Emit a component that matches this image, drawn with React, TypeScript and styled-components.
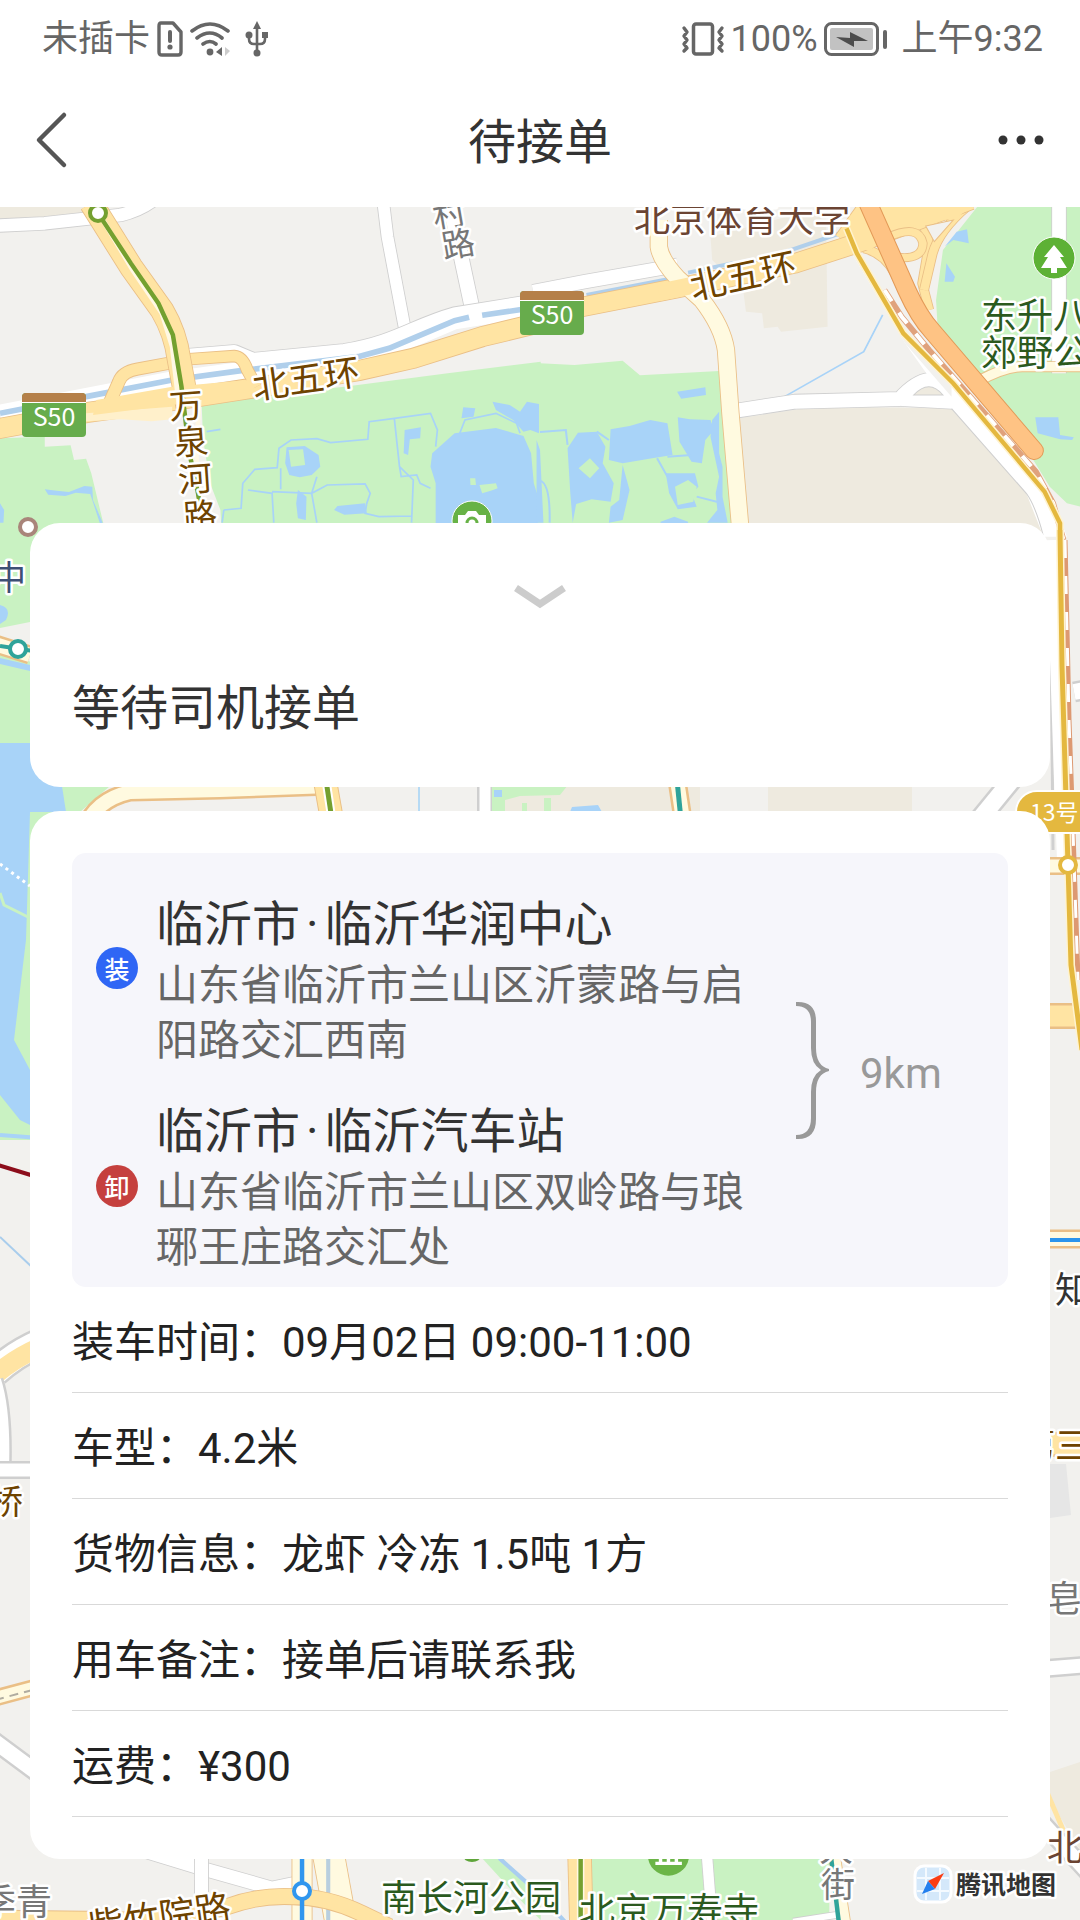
import React from "react";
import styled, { createGlobalStyle } from "styled-components";

const GlobalStyle = createGlobalStyle`
  *, *::before, *::after { box-sizing: border-box; }
  html, body { margin: 0; padding: 0; }
  body {
    background: #ffffff;
    color: #333333;
    font-family: Roboto, "Noto Sans CJK SC", sans-serif;
    font-size: 42px;
  }
  h1, h2, h3, p, dl, dd, ol { margin: 0; padding: 0; font-weight: 400; }
`;

const Page = styled.div`
  display: flex;
  flex-direction: column;
  min-height: 100vh;
`;

const StatusBar = styled.div`
  display: flex;
  align-items: center;
  justify-content: space-between;
  height: 74px;
  padding: 3px 37px 0 42px;
  color: #666666;
  font-size: 36px;
  line-height: 44px;
`;

const StatusGroup = styled.div<{ $gap: number }>`
  display: flex;
  align-items: center;
  gap: ${(p) => p.$gap}px;
  white-space: nowrap;

  svg { display: block; }
`;

const Clock = styled.span`
  margin-left: 8px;
`;

const NavBar = styled.header`
  display: grid;
  grid-template-columns: 1fr auto 1fr;
  align-items: center;
  height: 133px;
  padding: 0 30px;
`;

const NavTitle = styled.h1`
  padding-top: 4px;
  font-size: 48px;
  line-height: 64px;
`;

const IconButton = styled.button<{ $end?: boolean }>`
  display: flex;
  align-items: center;
  justify-self: ${(p) => (p.$end ? "end" : "start")};
  height: 64px;
  padding: 0 0 2px;
  border: 0;
  background: none;
  color: inherit;
  cursor: pointer;
`;

const MapArea = styled.main`
  position: relative;
  flex: 1;
  padding: 316px 30px 60px;
  background: #f2f1ee;
  overflow: hidden;
`;

const MapCanvas = styled.svg`
  position: absolute;
  inset: 0;
  width: 100%;
  height: 100%;
  font-family: "Noto Sans CJK SC", sans-serif;
`;

const Panels = styled.div`
  position: relative;
  display: flex;
  flex-direction: column;
  gap: 24px;
`;

const Card = styled.section`
  padding: 42px;
  border-radius: 30px;
  background: #ffffff;
`;

const CollapseButton = styled(IconButton)`
  justify-content: center;
  width: 100%;
  height: 64px;
`;

const StatusText = styled.h2`
  padding: 46px 0 2px;
  font-size: 48px;
  line-height: 68px;
`;

const RouteBox = styled.div`
  display: flex;
  align-items: center;
  padding: 14px 24px 12px;
  border-radius: 14px;
  background: #f6f6fb;
`;

const Stops = styled.ol`
  display: flex;
  flex-direction: column;
  gap: 29px;
  width: 650px;
  list-style: none;
`;

const Stop = styled.li`
  display: flex;
  align-items: center;
  gap: 18px;
`;

const Badge = styled.span<{ $color: string }>`
  display: flex;
  flex: none;
  align-items: center;
  justify-content: center;
  width: 42px;
  height: 42px;
  border-radius: 50%;
  background: ${(p) => p.$color};
  color: #ffffff;
  font-family: "Noto Sans CJK SC", sans-serif;
  font-size: 25px;
  font-weight: 500;
  line-height: 42px;
`;

const Place = styled.div<{ $top: number }>`
  flex: 1;
  padding-top: ${(p) => p.$top}px;
`;

const PlaceName = styled.h3`
  font-size: 48px;
  line-height: 66px;
`;

const Dot = styled.span`
  margin: 0 6px;
`;

const PlaceAddress = styled.p`
  width: 600px;
  color: #666666;
  line-height: 55px;
`;

const Distance = styled.div`
  display: flex;
  align-items: center;
  gap: 30px;
  margin-left: 50px;
  color: #999999;
  line-height: 56px;
`;

const DistanceValue = styled.span`
  padding-top: 6px;
`;

const Details = styled.dl`
  color: #222222;
`;

const DetailRow = styled.div`
  display: flex;
  padding: 28px 0 21px;
  border-bottom: 1px solid #d9d9d9;
  line-height: 56px;
`;

/* ---------- map helpers ---------- */

type RoadProps = { d: string; w: number; fill?: string; edge?: string };

function Road({ d, w, fill = "#ffffff", edge = "#cfcfcf" }: RoadProps) {
  return (
    <g fill="none" strokeLinejoin="round">
      <path d={d} stroke={edge} strokeWidth={w + 5} />
      <path d={d} stroke={fill} strokeWidth={w} />
    </g>
  );
}

type LabelProps = {
  x: number;
  y: number;
  text: string;
  color: string;
  size?: number;
  rotate?: number;
  anchor?: "start" | "middle" | "end";
  weight?: number;
};

function Label({ x, y, text, color, size = 36, rotate = 0, anchor = "middle", weight = 400 }: LabelProps) {
  return (
    <text
      transform={`translate(${x} ${y}) rotate(${rotate})`}
      y={Math.round(size * 0.38)}
      fontSize={size}
      fontWeight={weight}
      fill={color}
      textAnchor={anchor}
      stroke="#ffffff"
      strokeWidth={5}
      strokeLinejoin="round"
      paintOrder="stroke"
    >
      {text}
    </text>
  );
}

function Station({ x, y, color }: { x: number; y: number; color: string }) {
  return <circle cx={x} cy={y} r={8} fill="#ffffff" stroke={color} strokeWidth={4} />;
}

function Shield({ x, y }: { x: number; y: number }) {
  return (
    <g>
      <rect x={x} y={y} width={64} height={44} rx={4} fill="#67ac4c" />
      <path d={`M${x} ${y + 9}v-5q0-4 4-4h56q4 0 4 4v5z`} fill="#b58049" />
      <path d={`M${x} ${y + 9.5}h64`} stroke="#ffffff" />
      <text x={x + 32} y={y + 33} fontSize={25} fill="#ffffff" textAnchor="middle">
        S50
      </text>
    </g>
  );
}

const GREEN = "#c9f2c2";
const WATER = "#a8d3f8";
const YELLOW = "#ffe4a3";
const YELLOW_EDGE = "#eabf86";
const PALE = "#fffae0";
const BEIGE = "#eeeadf";

function NorthWest() {
  return (
    <g transform="translate(0 200) scale(.3444 .3333)">
      <path d="M0 20H250L255 45L0 60z" fill={BEIGE} />
      <path d="M585 605L1000 560L1300 520L1570 485V1020H645L640 930L610 850L590 720z" fill={GREEN} />
      <path d="M0 715L130 710V740L205 736L215 780L250 776L265 820L300 970V1020H0z" fill={GREEN} />
      <path d="M130 868L165 872L200 876L245 858L268 860L270 900L298 968L290 970L262 882L220 878L190 888L140 884zM0 910L12 930L10 968H0z" fill={WATER} />
      <Road d="M-10 77L130 70L350 45C390 35 420 20 445 0" w={38} />
      <Road d="M1112 0L1125 110L1178 400" w={34} />
      <Road d="M1300 -20L1345 200L1372 330" w={42} />
      <Road d="M540 470L680 458L735 482L1000 455C1150 430 1200 380 1320 345L1590 300" w={46} />
      <path d="M0 640L200 600L500 540L700 512L1040 470L1130 445L1320 362L1570 322" fill="none" stroke="#ffffff" strokeWidth="52" />
      <path d="M0 640L250 590L500 540L700 512L1040 470L1130 445L1320 362L1362 352M1400 346L1570 320" fill="none" stroke="#b0cfeb" strokeWidth="17" />
      <Road d="M-10 687L250 638L500 602L700 570L1040 512L1200 475L1400 410L1580 365" w={58} fill={YELLOW} edge={YELLOW_EDGE} />
      <path d="M250 664L350 658L440 664L500 658L500 620L250 640z" fill="#fff0cb" />
      <Road d="M315 615L345 545Q355 515 400 507L500 488" w={34} fill={YELLOW} edge={YELLOW_EDGE} />
      <Road d="M540 478L680 468Q705 470 718 510L745 560" w={32} fill={YELLOW} edge={YELLOW_EDGE} />
      <Road d="M265 10L380 200L470 330Q510 400 520 480L545 620" w={66} fill={YELLOW} edge={YELLOW_EDGE} />
      <path d="M280 600L500 560L720 540L740 570L500 615L270 645z" fill={YELLOW} />
      <path d="M270 10L385 210L470 340L500 440L520 620M578 600L570 770L590 970" fill="none" stroke="#fff8e4" strokeWidth="14" />
      <path d="M285 40L380 190L460 310L502 405L527 560L550 760L575 880L590 980" fill="none" stroke="#74a02f" strokeWidth="13" />
      {/* ponds and ditches of the park */}
      <path d="M1255 760L1320 700L1440 684L1520 708L1542 760L1550 850L1562 890V970H1265V850L1250 800z" fill={WATER} />
      <g fill="none" stroke={WATER} strokeWidth="5">
        <path d="M600 695L640 688M650 930L700 925L705 850L740 808L805 803L810 745L845 720L920 716L960 728L1068 718L1072 665L1140 656L1250 640L1270 690L1265 740M1145 656L1160 800L1200 840L1195 968M1160 800L1165 830L1210 825L1220 850L1250 865M720 870L790 880L795 968M790 875L905 880L950 855L1060 852L1075 880L1065 910L1060 940L1100 950L1195 948M920 830L905 880L920 968M815 805V868M650 930L645 968" />
        <path d="M1335 700L1350 660L1440 640L1500 670L1510 700" />
      </g>
      <path d="M832 742L885 738L925 765L930 800L905 825L870 832L840 825L828 790zM865 870L890 890L888 960L865 955L860 910zM980 918L1060 910L1065 940L1000 944L970 930zM1175 690L1222 682L1220 715L1190 718L1185 765L1172 760zM1345 622L1380 625L1375 650L1340 655zM1430 605L1480 615L1510 635L1530 605L1565 612V700L1540 690L1520 695L1490 660L1440 630z" fill={WATER} />
      <path d="M838 750L880 748L886 795L845 800zM1365 835L1380 835L1382 855L1366 855zM1392 855L1440 850L1445 865L1425 872L1400 880z" fill={GREEN} />
    </g>
  );
}

function NorthEast() {
  return (
    <g transform="translate(540 200) scale(.3444 .3333)">
      <path d="M495 110L830 20L835 380L700 395L690 380L650 385L645 340L598 335L590 270L500 180z" fill={BEIGE} />
      <path d="M0 490L100 495L240 482L290 526L520 513L560 970H0z" fill={GREEN} />
      <path d="M1270 20H1570V920L1530 910L1480 860L1290 540L1155 390L1150 300L1170 150z" fill={GREEN} />
      <path d="M575 655L800 620L1195 625L1415 880L1465 1010H610z" fill={BEIGE} />
      {/* lakes */}
      <path d="M0 750L10 968H-10V720zM80 745L110 698L165 695L190 740L182 790L214 850L205 905L150 898L105 912L95 968L88 880zM205 688L260 678L320 660L370 670L385 765L330 774L240 790L200 780zM400 652L435 658L495 660L505 690L480 720L470 790L440 785L405 725zM500 660L520 635V760L530 800V890L545 968H485L515 930L510 880L520 830L495 710zM365 820L450 820L460 860L440 880L455 920L400 928L375 880zM240 795L260 870L240 960L200 968L205 920L230 900zM398 575L480 562L482 585L410 596zM350 965L390 950L430 965V970H350z" fill={WATER} />
      <path d="M145 775L172 805L145 835L112 805zM392 860L430 840L455 860L445 905L400 915z" fill={GREEN} />
      <path d="M0 696L75 690L80 735M165 695L200 720M370 770L440 765M340 775L370 830M0 842Q30 850 28 968M455 890L530 910" fill="none" stroke={WATER} strokeWidth="6" />
      <path d="M1210 95L1240 88L1245 130L1200 120L1175 140zM1180 190L1205 230L1200 245L1175 245zM1438 652H1505L1510 705L1550 712L1545 720L1510 718L1445 700z" fill={WATER} />
      <path d="M995 345L940 455L710 590" fill="none" stroke={WATER} strokeWidth="5" />
      {/* streets */}
      <Road d="M-20 275L130 245L350 205L400 195" w={40} />
      <path d="M135 285L375 237M430 218L560 190M700 160L900 90" fill="none" stroke="#b0cfeb" strokeWidth="12" />
      <Road d="M1507 0V520" w={40} />
      <Road d="M1270 545Q1350 500 1400 500H1570" w={28} fill={PALE} edge={YELLOW_EDGE} />
      <Road d="M570 632L740 605L1045 597Q1090 545 1130 540Q1170 545 1190 590L1210 606L1050 597" w={42} />
      <path d="M880 90L905 160L1060 430L1195 626L1412 880L1462 1010H1530L1500 930L1460 850L1240 590L1060 390L930 160z" fill="#ffffff" />
      <path d="M880 90L905 160L1060 430L1195 590L1195 560L1060 380L930 160z" fill="#f2f1ee" />
      <path d="M1195 626L1412 880Q1440 920 1462 1010" fill="none" stroke="#cfcfcf" strokeWidth="3" />
      <path d="M1085 585Q1130 535 1170 585z" fill={BEIGE} stroke="#cfcfcf" strokeWidth="3" />
      {/* ring road and interchange */}
      <Road d="M880 120L950 20" w={50} fill={YELLOW} edge={YELLOW_EDGE} />
      <Road d="M940 145Q1000 160 1030 220L1075 320L1130 400" w={24} fill={YELLOW} edge={YELLOW_EDGE} />
      <Road d="M1110 60L1130 130L1110 250L1130 330" w={24} fill={YELLOW} edge={YELLOW_EDGE} />
      <Road d="M1240 20Q1160 90 1140 160L1115 270" w={24} fill={YELLOW} edge={YELLOW_EDGE} />
      <Road d="M-20 350L400 264L740 190L920 130L1060 75L1110 55L1250 0" w={56} fill={YELLOW} edge={YELLOW_EDGE} />
      <path d="M900 110L980 20L1250 20L1210 55L1110 70L1020 100L960 150L890 150z" fill={YELLOW} />
      <Road d="M1010 112Q1100 70 1112 130Q1110 180 1040 172" w={22} fill={YELLOW} edge={YELLOW_EDGE} />
      <path d="M1120 78L1200 60L1145 125z" fill="#f2f1ee" stroke={YELLOW_EDGE} strokeWidth="3" />
      <Road d="M345 60V140Q350 180 400 235L470 300Q530 380 540 450L553 640L582 990" w={48} fill={PALE} edge={YELLOW_EDGE} />
      <path d="M340 252L420 235L500 217L520 265L400 292L350 302z" fill={YELLOW} />
      <path d="M1000 270L1050 350L1130 450L1300 650L1440 815L1490 910L1520 1020" fill="none" stroke="#e0a27c" strokeWidth="17" />
      <path d="M1000 270L1050 350L1130 450L1300 650L1440 815L1490 910L1520 1020" fill="none" stroke="#ffffff" strokeWidth="12" strokeDasharray="40 40" />
      <g fill="none" strokeLinecap="round" strokeLinejoin="round">
        <path d="M940 -20L1065 270Q1100 350 1140 395L1435 752" stroke="#e39a58" strokeWidth="56" />
        <path d="M940 -20L1065 270Q1100 350 1140 395L1435 752" stroke="#fec384" strokeWidth="50" />
      </g>
      <path d="M890 85L920 160L1055 400L1200 550L1465 875L1510 970V1030" fill="none" stroke="#fff3cf" strokeWidth="22" />
      <path d="M890 85L920 160L1055 400L1200 550L1465 875L1510 970V1030" fill="none" stroke="#e4b83f" strokeWidth="13" />
    </g>
  );
}

function WestEdge() {
  return (
    <g>
      <path d="M0 520H100V610L30 622L0 628zM0 655L60 668V800L30 1140H0z" fill={GREEN} />
      <path d="M0 605Q12 608 6 620L0 624zM0 658L30 665V671L0 664zM0 743H30L60 760L66 786V812H30L26 940L14 1040L30 1070V1125L20 1120L0 1095z" fill={WATER} />
      <path d="M0 893L4 905L30 918" fill="none" stroke={GREEN} strokeWidth="3" />
      <path d="M0 864L30 886" stroke="#ffffff" strokeWidth="3" strokeDasharray="3 4" />
      <path d="M62 786H110L80 812H66z" fill={GREEN} />
      <Road d="M-5 644L30 655" w={14} fill={PALE} edge={YELLOW_EDGE} />
      <path d="M0 646L40 652" stroke="#2fa39a" strokeWidth="4" />
      <path d="M0 1135L40 1138" stroke={WATER} strokeWidth="4" />
      <path d="M-2 1165L34 1176" stroke="#8c0d1b" strokeWidth="4" />
      <path d="M0 1237L34 1269" stroke="#a9cdec" strokeWidth="2" />
      <Road d="M-5 1372Q15 1354 40 1343" w={26} />
      <path d="M-5 1375Q15 1358 40 1347" fill="none" stroke={YELLOW} strokeWidth="19" />
      <Road d="M-4 1380Q6 1410 4 1470" w={10} />
      <Road d="M-5 1470H40" w={13} />
      <Road d="M-5 1698L40 1686" w={12} fill={PALE} edge={YELLOW_EDGE} />
      <path d="M-5 1700L40 1688" stroke="#b0aca0" strokeWidth="2" strokeDasharray="9 6" />
      <Road d="M-10 1738L40 1775" w={15} />
    </g>
  );
}

function MiddleStrip() {
  return (
    <g>
      <Road d="M84 830Q95 800 130 792L220 790L330 786" w={14} fill={PALE} edge={YELLOW_EDGE} />
      <path d="M324 775L332 820" stroke={YELLOW_EDGE} strokeWidth="24" />
      <path d="M324 775L332 820" stroke={YELLOW} strokeWidth="22" />
      <path d="M326 780L332 820" stroke="#ffffff" strokeWidth="9" />
      <path d="M326 780L332 820" stroke="#74a02f" strokeWidth="5" />
      <path d="M419 780V815" stroke="#b6daf4" strokeWidth="2" />
      <Road d="M485 780V815" w={11} />
      <path d="M492 785H700V812H492zM768 785H912V812H768z" fill={BEIGE} />
      <path d="M492 785H568L560 795L520 796L505 800V812H492zM522 803H527V812H522zM544 798H551V812H544z" fill={GREEN} />
      <path d="M570 812L572 807L598 805L602 812zM494 790H502V797H494z" fill={WATER} />
      <Road d="M677 780L683 820" w={14} fill={PALE} edge={YELLOW_EDGE} />
      <path d="M677 780L681 820" stroke="#2fa39a" strokeWidth="5" />
      <Road d="M1020 770L975 825" w={17} />
    </g>
  );
}

function EastEdge() {
  return (
    <g fill="none">
      <path d="M1051 620L1053 850" stroke="#d0d0d0" strokeWidth="3" />
      <path d="M1055 540L1063 780L1066 860" stroke="#ffffff" strokeWidth="18" />
      <Road d="M1050 866H1085" w={13} fill={PALE} edge={YELLOW_EDGE} />
      <Road d="M1050 1016H1085" w={21} fill={YELLOW} edge={YELLOW_EDGE} />
      <path d="M1065 540L1069 720L1074 860L1078 980" stroke="#dd9972" strokeWidth="5" />
      <path d="M1065 540L1069 720L1074 860L1078 980" stroke="#ffffff" strokeWidth="3" strokeDasharray="18 18" />
      <Road d="M1074 692L1085 690" w={16} />
      <path d="M1060 530L1062 666L1068 865L1071 965L1082 1050" stroke="#fff3cf" strokeWidth="8" />
      <path d="M1060 530L1062 666L1068 865L1071 965L1082 1050" stroke="#e4b83f" strokeWidth="5" />
      <Road d="M1040 1239H1090" w={14} fill={PALE} edge={YELLOW_EDGE} />
      <path d="M1040 1240H1090" stroke="#2b95ec" strokeWidth="4" />
      <path d="M1050 1464H1066L1071 1515L1050 1518z" fill="#e6e6e6" />
      <Road d="M1040 1444L1090 1445" w={20} fill={YELLOW} edge={YELLOW_EDGE} />
      <Road d="M1040 1669L1090 1665" w={14} />
      <path d="M1050 1772L1080 1762V1850L1050 1800z" fill={BEIGE} />
      <path d="M1046 1790L1064 1832" stroke={YELLOW} strokeWidth="5" />
      <Road d="M1040 1820L1090 1875" w={14} />
      <rect x="1016" y="791" width="90" height="42" rx="21" fill="#e4b83f" stroke="#ffffff" strokeWidth="2" />
      <text x="1030" y="821" fontSize="23" fill="#ffffff">13号</text>
    </g>
  );
}

function SouthStrip() {
  return (
    <g>
      <g transform="translate(0 1780) scale(.3444 .3333)">
        <Road d="M300 175L585 265L790 325L860 310" w={40} />
        <Road d="M585 230V430" w={38} />
        <path d="M585 250V300" stroke="#ffffff" strokeWidth="38" />
        <path d="M1400 235H1460L1570 350V420L1520 370z" fill={GREEN} />
        <path d="M1450 235L1570 345L1640 425" fill="none" stroke="#a9cdf0" strokeWidth="12" />
        <Road d="M955 230L990 430" w={90} fill={PALE} edge={YELLOW_EDGE} />
        <path d="M953 235V430" stroke="#b9cfdf" strokeWidth="12" />
        <Road d="M877 230V430" w={56} fill={PALE} edge={YELLOW_EDGE} />
        <Road d="M0 415L250 418Q480 430 660 380Q750 345 850 350Q950 350 1050 400L1130 440" w={46} fill={YELLOW} edge={YELLOW_EDGE} />
        <path d="M877 230V430" stroke="#3096ee" strokeWidth="13" />
      </g>
      <g transform="translate(540 1780) scale(.3444 .3333)">
        <path d="M140 235H840V400L700 430H140z" fill={GREEN} />
        <Road d="M115 230L120 430" w={66} fill={YELLOW} edge={YELLOW_EDGE} />
        <path d="M118 230V430" stroke="#fff8e4" strokeWidth="22" />
        <path d="M118 230V430" stroke="#74a02f" strokeWidth="13" />
        <Road d="M485 230L500 430" w={30} />
        <Road d="M735 425L860 405" w={18} />
        <Road d="M855 230L885 430" w={32} fill={PALE} edge={YELLOW_EDGE} />
        <path d="M845 230L868 430" stroke="#2fa39a" strokeWidth="13" />
        <ellipse cx="373" cy="225" rx="60" ry="62" fill="#6bb547" />
        <path d="M335 250H412M350 225V250M373 225V250M396 225V250" stroke="#ffffff" strokeWidth="10" />
      </g>
      <ellipse cx="472" cy="1856" rx="9" ry="6" fill="#5fa53a" />
      <Station x={302} y={1891} color="#3096ee" />
    </g>
  );
}

function MapLabels() {
  const road = "#6e4300";
  const park = "#2b5a1e";
  const grey = "#777777";
  const school = "#6b4433";
  return (
    <g>
      <Shield x={22} y={393} />
      <Shield x={520} y={291} />
      <Station x={98} y={213} color="#74a02f" />
      <Station x={28} y={527} color="#a9857a" />
      <Station x={18} y={649} color="#2fa39a" />
      <Station x={1068} y={865} color="#e4b83f" />

      <Label x={449} y={213} text="村" color={grey} size={33} rotate={-10} />
      <Label x={458} y={243} text="路" color={grey} size={33} rotate={-10} />
      <Label x={306} y={378} text="北五环" color={road} rotate={-8} />
      <Label x={743} y={275} text="北五环" color={road} rotate={-12} />
      <Label x={186} y={405} text="万" color={road} size={34} rotate={-4} />
      <Label x={191} y={441} text="泉" color={road} size={34} rotate={-4} />
      <Label x={195} y={478} text="河" color={road} size={34} rotate={-4} />
      <Label x={200} y={515} text="路" color={road} size={34} rotate={-4} />
      <Label x={742} y={218} text="北京体育大学" color={school} />
      <Label x={981} y={315} text="东升八" color={park} anchor="start" />
      <Label x={981} y={352} text="郊野公" color={park} anchor="start" />

      <circle cx={1054} cy={258} r={21} fill="#5db135" stroke="#ffffff" strokeWidth={1} />
      <path d="M1054 245L1064 257H1060L1067 268H1057V273H1051V268H1041L1048 257H1044z" fill="#ffffff" />
      <circle cx={472} cy={521} r={20} fill="#67b246" stroke="#ffffff" strokeWidth={1} />
      <path d="M458 515H465L468 511H476L479 515H486V530H458z" fill="#ffffff" />
      <circle cx={472} cy={523} r={5} fill="none" stroke="#67b246" strokeWidth={3} />

      <Label x={26} y={577} text="中" color="#3d4f74" size={34} anchor="end" />
      <Label x={23} y={1501} text="桥" color={road} size={34} anchor="end" />
      <Label x={52} y={1901} text="季青" color={grey} anchor="end" />
      <Label x={1055} y={1289} text="知" color="#333333" anchor="start" size={36} />
      <Label x={1019} y={1445} text="第三" color={road} anchor="start" />
      <Label x={1046} y={1598} text="皂" color={grey} anchor="start" />
      <Label x={1047} y={1847} text="北" color={school} anchor="start" />
      <Label x={159} y={1916} text="紫竹院路" color={road} rotate={-8} />
      <Label x={471} y={1897} text="南长河公园" color={park} />
      <Label x={669} y={1910} text="北京万寿寺" color={park} />
      <Label x={836} y={1848} text="大" color={grey} size={34} />
      <Label x={838} y={1884} text="街" color={grey} size={34} />

      <rect x={915} y={1866} width={36} height={36} rx={9} fill="#d4e8fa" stroke="#ffffff" strokeWidth={3} />
      <path d="M917 1878H949M917 1891H949M926 1868V1900M940 1868V1900" stroke="#f4faff" strokeWidth={2} />
      <path d="M944 1873L935 1889L928 1881z" fill="#fa3d14" />
      <path d="M922 1894L935 1889L928 1881z" fill="#2580ee" />
      <Label x={1006} y={1884} text="腾讯地图" color="#333333" size={25} weight={700} />
    </g>
  );
}

function CityMap() {
  return (
    <MapCanvas viewBox="0 207 1080 1713" preserveAspectRatio="xMidYMin slice" role="img" aria-label="地图">
      <rect y="207" width="1080" height="1713" fill="#f2f1ee" />
      <WestEdge />
      <NorthWest />
      <NorthEast />
      <MiddleStrip />
      <EastEdge />
      <SouthStrip />
      <MapLabels />
    </MapCanvas>
  );
}

/* ---------- icons ---------- */

const SimIcon = () => (
  <svg width="26" height="36" viewBox="0 0 26 36" fill="none" stroke="currentColor" strokeWidth="3.4" strokeLinejoin="round">
    <path d="M4 2H16L24 11V31Q24 34 21 34H5Q2 34 2 31V5Q2 2 4 2z" />
    <path d="M13 11V20" strokeWidth="4" strokeLinecap="round" />
    <circle cx="13" cy="26" r="2.6" fill="currentColor" stroke="none" />
  </svg>
);

const WifiIcon = () => (
  <svg width="40" height="36" viewBox="0 0 40 36" fill="none" stroke="currentColor" strokeWidth="3.6" strokeLinecap="round">
    <path d="M2 10Q20 -4 38 10M7 17Q20 7 32 17M13 23Q20 18 26 23" />
    <circle cx="20" cy="31" r="3.4" fill="currentColor" stroke="none" />
    <path d="M32 26V35L26 31z" fill="currentColor" stroke="none" />
    <path d="M35 26V35L40 30z" fill="#cccccc" stroke="none" />
  </svg>
);

const UsbIcon = () => (
  <svg width="36" height="36" viewBox="-8 0 36 36" fill="none" stroke="currentColor" strokeWidth="2.6">
    <path d="M12 6V30M4 14V18Q4 23 9 23H15Q20 23 20 18V14" />
    <path d="M12 0L16 8H8zM17 11H23V17H17z" fill="currentColor" stroke="none" />
    <circle cx="4" cy="14" r="3.5" fill="currentColor" stroke="none" />
    <circle cx="12" cy="32" r="3.5" fill="currentColor" stroke="none" />
  </svg>
);

const VibrateIcon = () => (
  <svg width="44" height="36" viewBox="0 0 44 36" fill="none" stroke="currentColor" strokeLinejoin="round" strokeLinecap="round">
    <rect x="12.5" y="3" width="19" height="30" rx="2.5" strokeWidth="3.5" />
    <path d="M3 7L6 11L3 15L6 19L3 23L6 27L3 30M41 7L38 11L41 15L38 19L41 23L38 27L41 30" strokeWidth="3.4" />
  </svg>
);

const BatteryIcon = () => (
  <svg width="64" height="36" viewBox="0 0 64 36">
    <rect x="1.5" y="2.5" width="52" height="31" rx="6" fill="none" stroke="currentColor" strokeWidth="3" />
    <rect x="6" y="7" width="43" height="22" rx="2" fill="#c2c2c2" />
    <path d="M12 16L26 17V11L44 20L30 20V26z" fill="#4d4d4d" />
    <path d="M61 11V26" stroke="currentColor" strokeWidth="4" strokeLinecap="round" />
  </svg>
);

const BackIcon = () => (
  <svg width="42" height="60" viewBox="0 0 42 60" fill="none" stroke="#555555" strokeWidth="4.5" strokeLinecap="round" strokeLinejoin="round">
    <path d="M34 5L9 30L34 55" />
  </svg>
);

const MoreIcon = () => (
  <svg width="52" height="12" viewBox="0 0 52 12" fill="#333333">
    <circle cx="5" cy="6" r="4.5" />
    <circle cx="23" cy="6" r="4.5" />
    <circle cx="41" cy="6" r="4.5" />
  </svg>
);

const CollapseIcon = () => (
  <svg width="54" height="26" viewBox="0 0 54 26" fill="none" stroke="#cccccc" strokeWidth="7">
    <path d="M3 5L27 21L51 5" />
  </svg>
);

const BraceIcon = () => (
  <svg width="34" height="138" viewBox="0 0 34 138" fill="#999999">
    <path d="M0 0H2Q20 0 20 19V46Q20 64 33 67V69Q20 72 20 90V117Q20 137 2 137H0V133Q15 133 15 116V90Q15 74 25 68Q15 62 15 46V20Q15 4 0 4z" />
  </svg>
);

const stops = [
  { tag: "装", color: "#2f66f5", place: "临沂华润中心", address: "山东省临沂市兰山区沂蒙路与启阳路交汇西南", top: 25 },
  { tag: "卸", color: "#c5403e", place: "临沂汽车站", address: "山东省临沂市兰山区双岭路与琅琊王庄路交汇处", top: 2 },
];

const details = [
  ["装车时间：", "09月02日 09:00-11:00"],
  ["车型：", "4.2米"],
  ["货物信息：", "龙虾 冷冻 1.5吨 1方"],
  ["用车备注：", "接单后请联系我"],
  ["运费：", "¥300"],
];

export default function App() {
  return (
    <Page>
      <GlobalStyle />
      <StatusBar>
        <StatusGroup $gap={7}>
          <span>未插卡</span>
          <SimIcon />
          <WifiIcon />
          <UsbIcon />
        </StatusGroup>
        <StatusGroup $gap={6}>
          <VibrateIcon />
          <span>100%</span>
          <BatteryIcon />
          <Clock>上午9:32</Clock>
        </StatusGroup>
      </StatusBar>
      <NavBar>
        <IconButton type="button" aria-label="返回">
          <BackIcon />
        </IconButton>
        <NavTitle>待接单</NavTitle>
        <IconButton type="button" aria-label="更多" $end>
          <MoreIcon />
        </IconButton>
      </NavBar>
      <MapArea>
        <CityMap />
        <Panels>
          <Card>
            <CollapseButton type="button" aria-label="收起">
              <CollapseIcon />
            </CollapseButton>
            <StatusText>等待司机接单</StatusText>
          </Card>
          <Card>
            <RouteBox>
              <Stops>
                {stops.map((s) => (
                  <Stop key={s.tag}>
                    <Badge $color={s.color}>{s.tag}</Badge>
                    <Place $top={s.top}>
                      <PlaceName>
                        临沂市<Dot>·</Dot>
                        {s.place}
                      </PlaceName>
                      <PlaceAddress>{s.address}</PlaceAddress>
                    </Place>
                  </Stop>
                ))}
              </Stops>
              <Distance>
                <BraceIcon />
                <DistanceValue>9km</DistanceValue>
              </Distance>
            </RouteBox>
            <Details>
              {details.map(([label, value]) => (
                <DetailRow key={label}>
                  <dt>{label}</dt>
                  <dd>{value}</dd>
                </DetailRow>
              ))}
            </Details>
          </Card>
        </Panels>
      </MapArea>
    </Page>
  );
}
